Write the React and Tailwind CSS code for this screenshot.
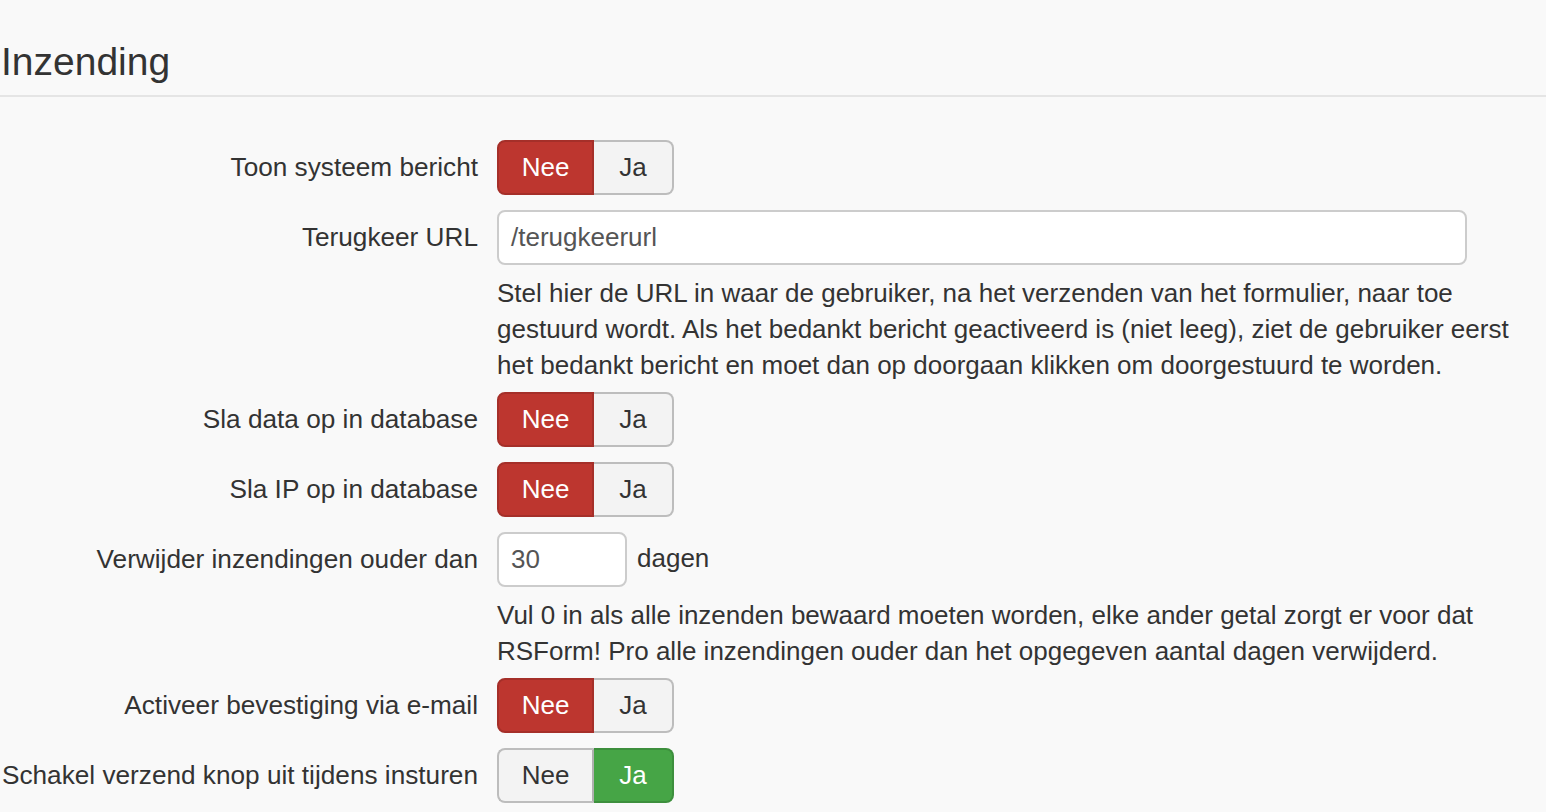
import React from "react";

const font = { fontFamily: '"Liberation Sans", Arial, Helvetica, sans-serif' };

function Toggle({ value }) {
  const nee = value === "nee";
  return (
    <div className="flex h-[55px]">
      <div
        className={
          "w-[97px] flex items-center justify-center rounded-l-[8px] border-2 text-[26px] " +
          (nee
            ? "bg-[#bd362f] border-[#a52f29] text-white"
            : "bg-[#f3f3f3] border-[#bdbdbd] border-r-[#b0b0b0] text-[#333]")
        }
      >
        Nee
      </div>
      <div
        className={
          "w-[80px] flex items-center justify-center rounded-r-[8px] border-2 border-l-0 text-[26px] " +
          (!nee
            ? "bg-[#46a546] border-[#3d8f3d] text-white"
            : "bg-[#f3f3f3] border-[#bdbdbd] text-[#333]")
        }
      >
        Ja
      </div>
    </div>
  );
}

function Row({ label, children, help, last }) {
  return (
    <div className={"flex " + (help ? "mb-[9px]" : last ? "" : "mb-[15px]")}>
      <div className="w-[478px] shrink-0 h-[55px] flex items-center justify-end text-[26.2px] text-[#333] whitespace-nowrap">
        {label}
      </div>
      <div className="ml-[19px] flex flex-col">
        {children}
        {help && (
          <div className="mt-[10px] text-[26px] leading-[36px] text-[#333] whitespace-nowrap">
            {help.map((l, i) => (
              <div key={i}>{l}</div>
            ))}
          </div>
        )}
      </div>
    </div>
  );
}

export default function App() {
  return (
    <div className="min-h-[812px] w-[1546px] bg-[#f9f9f9] overflow-hidden" style={font}>
      <h2 className="pt-[38px] text-[39px] leading-[48px] text-[#333] font-normal pl-[1px]">Inzending</h2>
      <div className="mt-[9px] h-[2px] bg-[#e5e5e5]" />
      <div className="pt-[43px]">
        <Row label="Toon systeem bericht">
          <Toggle value="nee" />
        </Row>
        <Row
          label="Terugkeer URL"
          help={[
            "Stel hier de URL in waar de gebruiker, na het verzenden van het formulier, naar toe",
            "gestuurd wordt. Als het bedankt bericht geactiveerd is (niet leeg), ziet de gebruiker eerst",
            "het bedankt bericht en moet dan op doorgaan klikken om doorgestuurd te worden.",
          ]}
        >
          <div className="w-[970px] h-[55px] bg-white border-2 border-[#cccccc] rounded-[8px] flex items-center px-[12px] text-[26px] text-[#555]">
            /terugkeerurl
          </div>
        </Row>
        <Row label="Sla data op in database">
          <Toggle value="nee" />
        </Row>
        <Row label="Sla IP op in database">
          <Toggle value="nee" />
        </Row>
        <Row
          label="Verwijder inzendingen ouder dan"
          help={[
            "Vul 0 in als alle inzenden bewaard moeten worden, elke ander getal zorgt er voor dat",
            "RSForm! Pro alle inzendingen ouder dan het opgegeven aantal dagen verwijderd.",
          ]}
        >
          <div className="flex items-center h-[55px]">
            <div className="w-[130px] h-[55px] bg-white border-2 border-[#cccccc] rounded-[8px] flex items-center px-[12px] text-[26px] text-[#555]">
              30
            </div>
            <span className="ml-[10px] text-[26px] text-[#333] -mt-[2px]">dagen</span>
          </div>
        </Row>
        <Row label="Activeer bevestiging via e-mail">
          <Toggle value="nee" />
        </Row>
        <Row label="Schakel verzend knop uit tijdens insturen" last>
          <Toggle value="ja" />
        </Row>
      </div>
    </div>
  );
}
